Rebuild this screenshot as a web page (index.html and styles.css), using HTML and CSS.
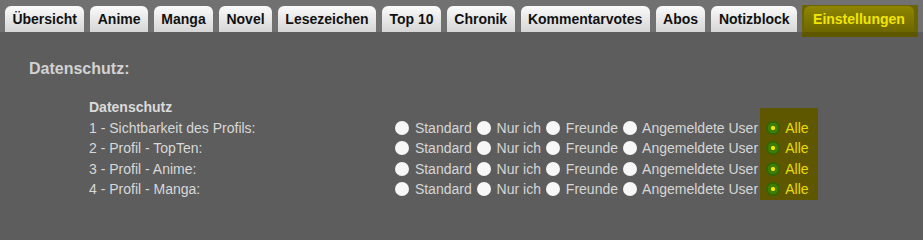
FILE: index.html
```html
<!DOCTYPE html>
<html lang="de">
<head>
<meta charset="utf-8">
<title>Einstellungen</title>
<link rel="stylesheet" href="styles.css">
</head>
<body>
<nav class="tabs">
  <a class="tab">Übersicht</a>
  <a class="tab">Anime</a>
  <a class="tab">Manga</a>
  <a class="tab">Novel</a>
  <a class="tab">Lesezeichen</a>
  <a class="tab">Top 10</a>
  <a class="tab">Chronik</a>
  <a class="tab">Kommentarvotes</a>
  <a class="tab">Abos</a>
  <a class="tab">Notizblock</a>
  <span class="tab-active-wrap"><a class="tab tab-active">Einstellungen</a></span>
</nav>
<main class="content">
  <h2 class="section-title">Datenschutz:</h2>
  <div class="privacy">
    <div class="sub-title">Datenschutz</div>
    <div class="cell-empty"></div>
    <div class="alle-cell alle-top"></div>

    <div class="label">1 - Sichtbarkeit des Profils:</div>
    <div class="options"><input type="radio" name="r1" class="radio"> Standard<input type="radio" name="r1" class="radio"> Nur ich<input type="radio" name="r1" class="radio"> Freunde<input type="radio" name="r1" class="radio"> Angemeldete User</div>
    <div class="alle-cell"><input type="radio" name="r1" class="radio" checked> Alle</div>

    <div class="label">2 - Profil - TopTen:</div>
    <div class="options"><input type="radio" name="r2" class="radio"> Standard<input type="radio" name="r2" class="radio"> Nur ich<input type="radio" name="r2" class="radio"> Freunde<input type="radio" name="r2" class="radio"> Angemeldete User</div>
    <div class="alle-cell"><input type="radio" name="r2" class="radio" checked> Alle</div>

    <div class="label">3 - Profil - Anime:</div>
    <div class="options"><input type="radio" name="r3" class="radio"> Standard<input type="radio" name="r3" class="radio"> Nur ich<input type="radio" name="r3" class="radio"> Freunde<input type="radio" name="r3" class="radio"> Angemeldete User</div>
    <div class="alle-cell"><input type="radio" name="r3" class="radio" checked> Alle</div>

    <div class="label">4 - Profil - Manga:</div>
    <div class="options"><input type="radio" name="r4" class="radio"> Standard<input type="radio" name="r4" class="radio"> Nur ich<input type="radio" name="r4" class="radio"> Freunde<input type="radio" name="r4" class="radio"> Angemeldete User</div>
    <div class="alle-cell"><input type="radio" name="r4" class="radio" checked> Alle</div>
  </div>
</main>
</body>
</html>
```
FILE: styles.css
```css
html, body {
  margin: 0;
  padding: 0;
}
body {
  background: #5d5d5d;
  font-family: "Liberation Sans", Arial, sans-serif;
  color: #d8d8d8;
  overflow: hidden;
}
.tabs {
  display: flex;
  align-items: flex-end;
  gap: 6px;
  height: 32px;
  padding-left: 5px;
  background: #717171;
}
.tab {
  display: block;
  height: 26px;
  line-height: 26px;
  padding: 0 7.4px;
  border-radius: 6px 6px 0 0;
  background: linear-gradient(#fbfbfb, #e6e6e6 55%, #d6d6d6);
  color: #111;
  font-size: 14px;
  font-weight: bold;
  white-space: nowrap;
}
.tab-active-wrap {
  display: block;
  margin-left: -1px;
  margin-bottom: -5px;
  padding: 1px 4px 5px 2px;
  background: linear-gradient(#6b6402 0 27px, #5f5700 27px);
}
.tab-active {
  padding: 0 9px;
  background: linear-gradient(#8e8600, #7a7300 60%, #6c6600);
  color: #f3e600;
}
.content {
  padding: 28px 0 0 29px;
}
.section-title {
  margin: 0 0 19px;
  font-size: 16px;
  line-height: 18px;
  font-weight: bold;
  color: #d2d2d2;
}
.privacy {
  margin-left: 60px;
  display: grid;
  grid-template-columns: 301px max-content max-content;
  grid-auto-rows: 20.5px;
  font-size: 14px;
  line-height: 20.5px;
}
.sub-title {
  font-weight: bold;
  color: #dadada;
  white-space: nowrap;
}
.label, .options, .alle-cell {
  white-space: nowrap;
}
.options {
  color: #d6d6d6;
}
.alle-cell {
  margin-left: 2px;
  padding: 0 9px 0 1px;
  background: #5f5600;
  color: #e9dc00;
}
.alle-top {
  background: linear-gradient(transparent 0 11px, #5f5600 11px);
}
.radio {
  -webkit-appearance: none;
  appearance: none;
  width: 14px;
  height: 14px;
  margin: 0 2px 0 5px;
  border-radius: 50%;
  background: #f7f7f7;
  vertical-align: middle;
  position: relative;
  top: -1px;
}
.radio:checked {
  background: radial-gradient(circle, #f4e400 0 1.8px, #3f7d00 2.4px 5px, #2f6600 5.6px);
}
```
